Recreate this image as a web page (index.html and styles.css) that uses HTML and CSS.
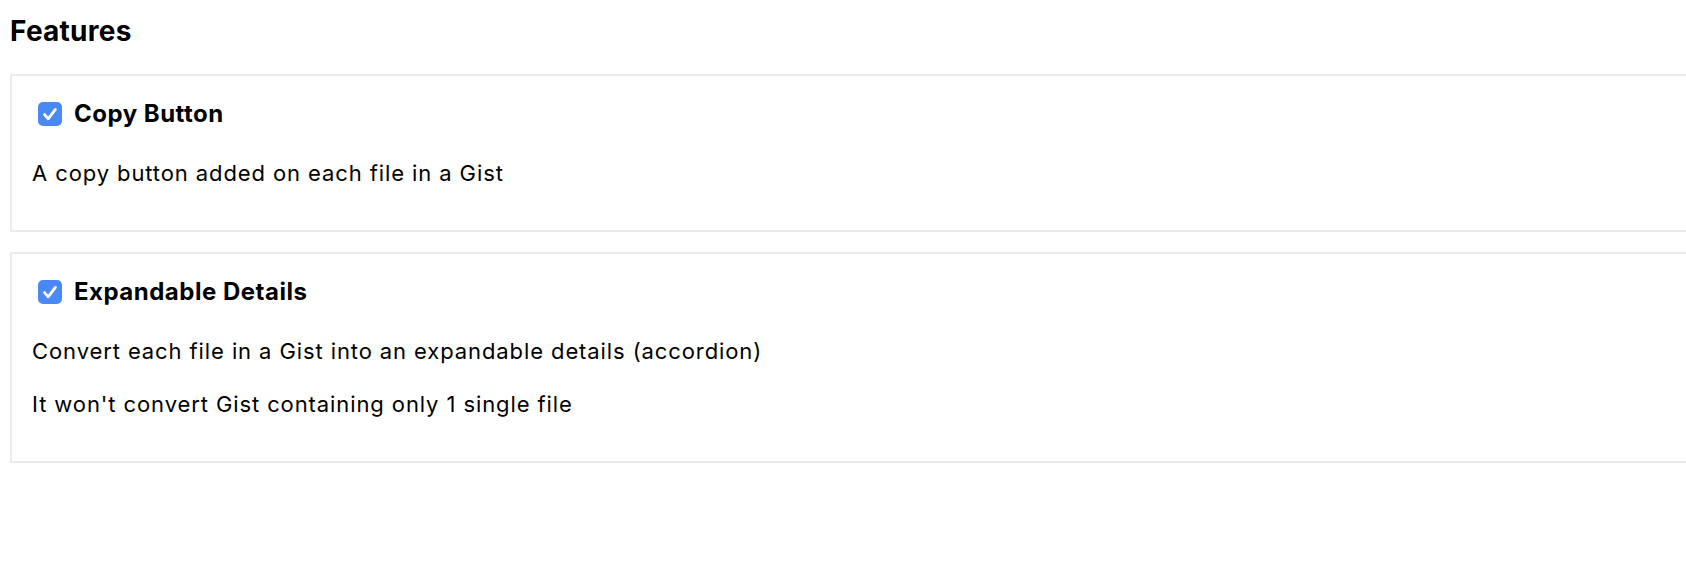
FILE: index.html
```html
<!DOCTYPE html>
<html lang="en">
<head>
<meta charset="utf-8">
<title>Features</title>
<link rel="stylesheet" href="styles.css">
</head>
<body>
<main class="page">
  <h3 class="title">Features</h3>

  <section class="card">
    <label class="card-head">
      <span class="check"><svg viewBox="0 0 24 24" width="24" height="24"><path d="M6.6 12.6 L10.2 16.8 L17.4 7.4" fill="none" stroke="#fff" stroke-width="2.8" stroke-linecap="round" stroke-linejoin="round"/></svg></span>
      <span class="card-title">Copy Button</span>
    </label>
    <p class="desc">A copy button added on each file in a Gist</p>
  </section>

  <section class="card">
    <label class="card-head">
      <span class="check"><svg viewBox="0 0 24 24" width="24" height="24"><path d="M6.6 12.6 L10.2 16.8 L17.4 7.4" fill="none" stroke="#fff" stroke-width="2.8" stroke-linecap="round" stroke-linejoin="round"/></svg></span>
      <span class="card-title">Expandable Details</span>
    </label>
    <p class="desc">Convert each file in a Gist into an expandable details (accordion)</p>
    <p class="desc">It won't convert Gist containing only 1 single file</p>
  </section>
</main>
</body>
</html>
```

FILE: styles.css
```css
html, body {
  margin: 0;
  padding: 0;
  background: #fff;
  overflow: hidden;
}

body {
  font-family: Inter, "Noto Sans", "Liberation Sans", sans-serif;
  color: #000;
}

.page {
  padding: 14px 0 0 10px;
  display: flex;
  flex-direction: column;
}

.title {
  margin: 0 0 26px 0;
  font-size: 28px;
  line-height: 34px;
  font-weight: 700;
  letter-spacing: 0.25px;
}

.card {
  border: 2px solid #ebebeb;
  margin-right: -40px;
  margin-bottom: 20px;
  padding: 22px 20px 44px 20px;
}

.card-head {
  display: flex;
  align-items: center;
  height: 32px;
  gap: 12px;
  margin-bottom: 30px;
}

.check {
  width: 24px;
  height: 24px;
  margin-left: 6px;
  border-radius: 5px;
  background: #4a89f3;
  display: flex;
  align-items: center;
  justify-content: center;
  flex: none;
}

.check svg {
  display: block;
}

.card-title {
  font-size: 24px;
  line-height: 32px;
  font-weight: 700;
  letter-spacing: 0.5px;
}

.desc {
  margin: 0;
  font-size: 22px;
  line-height: 26px;
  letter-spacing: 0.9px;
}

.desc + .desc {
  margin-top: 27px;
}
```
